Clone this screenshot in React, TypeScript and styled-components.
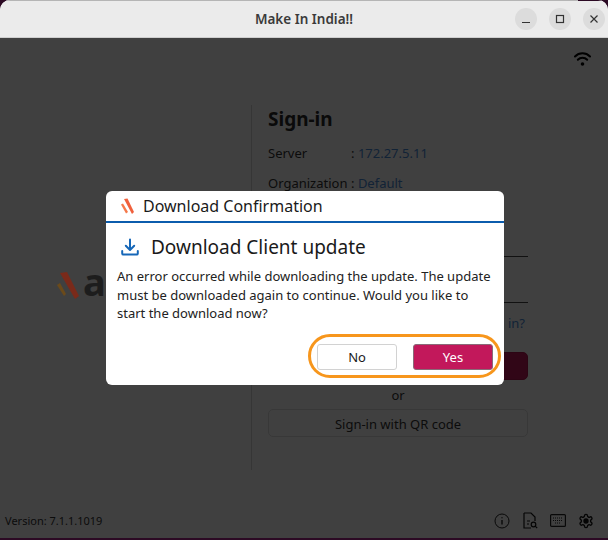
import styled, { createGlobalStyle } from 'styled-components'

const GlobalStyle = createGlobalStyle`
  html, body {
    margin: 0;
    padding: 0;
    background: #2c0a24;
  }
  * {
    box-sizing: border-box;
  }
`

const Window = styled.div`
  position: relative;
  width: 608px;
  height: 538px;
  display: flex;
  flex-direction: column;
  overflow: hidden;
  border-radius: 10px 10px 0 0;
  background: #fff;
  font-family: "Noto Sans", sans-serif;
  color: #1c1c1c;
`

const TitleBar = styled.header`
  position: relative;
  flex: none;
  height: 38px;
  display: flex;
  align-items: center;
  justify-content: flex-end;
  gap: 12px;
  padding-right: 3px;
  background: #ebebeb;
  border-top: 1px solid #b5b5b5;
  border-bottom: 1px solid #cfcfcf;

  &::after {
    content: '';
    position: absolute;
    top: -1px;
    right: 0;
    width: 30px;
    height: 1px;
    background: #2c0a24;
  }
`

const WindowTitle = styled.div`
  position: absolute;
  left: 0;
  right: 0;
  text-align: center;
  font-size: 13.5px;
  font-weight: 600;
  color: #3a3a3a;
`

const WindowButton = styled.div`
  width: 22px;
  height: 22px;
  border-radius: 50%;
  background: #dcdcdc;
  display: flex;
  align-items: center;
  justify-content: center;
  z-index: 1;
`

const Content = styled.main`
  flex: 1;
  min-height: 0;
  display: flex;
  flex-direction: column;
`

const TopRow = styled.div`
  flex: none;
  height: 67px;
  display: flex;
  justify-content: flex-end;
  padding: 13px 17px 0 0;
`

const Columns = styled.div`
  flex: none;
  height: 365px;
  display: flex;
`

/* sits above the backdrop: its colours are the dimmed ones seen in the picture */
const LogoColumn = styled.div`
  position: relative;
  z-index: 1;
  width: 251px;
  display: flex;
  align-items: flex-start;
  padding: 154px 0 0 57px;
`

const LogoText = styled.span`
  font-size: 38px;
  font-weight: 700;
  line-height: 44px;
  letter-spacing: -1px;
  color: #1d1d1d;
`

const FormColumn = styled.section`
  width: 277px;
  border-left: 1px solid #d8d8d8;
  padding: 0 0 0 16px;
  display: flex;
  flex-direction: column;
`

const Heading = styled.h1`
  margin: 0;
  height: 28px;
  font-size: 19px;
  line-height: 28px;
  font-weight: 700;
  color: #2a2a2a;
`

const InfoRow = styled.div`
  display: flex;
  height: 30px;
  margin-top: ${p => p.$top ?? 0}px;
  font-size: 13px;
  line-height: 18px;
`

const InfoLabel = styled.span`
  width: 83px;
  color: #333;
  white-space: nowrap;
`

const InfoValue = styled.span`
  color: #4a8ad8;
  white-space: nowrap;
`

const InfoColon = styled.span`
  color: #333;
`

const InputLine = styled.div`
  height: ${p => p.$height}px;
  border-bottom: 1px solid #444;
`

const ForgotLink = styled.div`
  height: 49px;
  padding: 11px 3px 0 0;
  text-align: right;
  font-size: 13px;
  line-height: 18px;
  color: #4a8ad8;
`

const FormButton = styled.div`
  flex: none;
  height: 28px;
  padding-top: 1px;
  display: flex;
  align-items: center;
  justify-content: center;
  border-radius: 5px;
  font-size: 13px;
  background: ${p => (p.$primary ? '#c2185b' : '#fff')};
  border: 1px solid ${p => (p.$primary ? '#b0174f' : '#ddd')};
  color: ${p => (p.$primary ? '#fff' : '#333')};
`

const OrText = styled.div`
  height: 29px;
  display: flex;
  align-items: center;
  justify-content: center;
  font-size: 13px;
  color: #333;
`

const Footer = styled.footer`
  flex: 1;
  display: flex;
  align-items: flex-start;
  justify-content: space-between;
  padding: 42px 14px 0 5px;
`

const Version = styled.span`
  font-size: 11px;
  line-height: 18px;
  color: #333;
`

const FooterIcons = styled.div`
  display: flex;
  align-items: center;
  gap: 12px;
  color: #222;
`

const Backdrop = styled.div`
  position: absolute;
  inset: 38px 0 0 0;
  background: rgba(0, 0, 0, 0.75);
`

const Dialog = styled.div`
  position: absolute;
  z-index: 2;
  left: 106px;
  top: 191px;
  width: 398px;
  height: 194px;
  display: flex;
  flex-direction: column;
  background: #fff;
  border-radius: 6px;
  color: #1a1a1a;
`

const DialogBar = styled.div`
  flex: none;
  height: 32px;
  display: flex;
  align-items: center;
  gap: 6px;
  padding-left: 14px;
  border-bottom: 2px solid #0b5cad;
  font-size: 16px;
`

const DialogHead = styled.div`
  flex: none;
  height: 44px;
  display: flex;
  align-items: center;
  gap: 12px;
  padding: 3px 0 0 15px;
  font-size: 19px;
`

const DialogText = styled.p`
  margin: 0;
  padding: 0 11px;
  font-size: 13px;
  line-height: 18.5px;
  color: #222;
`

const DialogActions = styled.div`
  flex: 1;
  display: flex;
  justify-content: flex-end;
  align-items: flex-start;
  padding: 11.5px 3px 0 0;
`

const Highlight = styled.div`
  display: flex;
  align-items: center;
  gap: 16px;
  height: 44px;
  padding: 2px 5px 0 6px;
  border: 3px solid #f7961c;
  border-radius: 22px;
`

const DialogButton = styled.div`
  width: 80px;
  height: 26px;
  display: flex;
  align-items: center;
  justify-content: center;
  border-radius: 3px;
  font-size: 13px;
  background: ${p => (p.$primary ? '#c2185b' : '#fff')};
  border: 1px solid ${p => (p.$primary ? '#8a6a78' : '#d2d2d2')};
  color: ${p => (p.$primary ? '#fff' : '#1a1a1a')};
`

const PageLogoMark = () => (
  <svg width="26" height="44" viewBox="0 0 26 44">
    <polygon points="3,14 10,13 22,37 18,40" fill="#7a2a1a" />
    <polygon points="0,26 3,24 9,35 7,37" fill="#6b4a1a" />
  </svg>
)

const DialogLogoMark = () => (
  <svg width="17" height="17" viewBox="0 0 17 17">
    <polygon points="4,1 7.5,0.5 14,14 12,16" fill="#f0603c" />
    <polygon points="1,6.5 3,5.5 8,14 6,15.5" fill="#f5794a" />
  </svg>
)

const DownloadIcon = () => (
  <svg width="18" height="18" viewBox="0 0 18 18" fill="none" stroke="#1667b8" strokeWidth="2" strokeLinecap="round" strokeLinejoin="round">
    <path d="M9 1.5v10M4.8 7.8L9 12l4.2-4.2" />
    <path d="M1.2 13v2.6a1 1 0 0 0 1 1h13.6a1 1 0 0 0 1-1V13" />
  </svg>
)

export default function App() {
  return (
    <>
      <GlobalStyle />
      <Window>
        <TitleBar>
          <WindowTitle>Make In India!!</WindowTitle>
          <WindowButton>
            <svg width="10" height="10" viewBox="0 0 10 10" stroke="#333" strokeWidth="1.2"><path d="M1 8.5h8" /></svg>
          </WindowButton>
          <WindowButton>
            <svg width="10" height="10" viewBox="0 0 10 10" fill="none" stroke="#333" strokeWidth="1.2"><rect x="1.5" y="1.5" width="7" height="7" /></svg>
          </WindowButton>
          <WindowButton>
            <svg width="10" height="10" viewBox="0 0 10 10" stroke="#333" strokeWidth="1.2"><path d="M1.5 1.5l7 7M8.5 1.5l-7 7" /></svg>
          </WindowButton>
        </TitleBar>
        <Content>
          <TopRow>
            <svg width="17" height="16" viewBox="0 0 17 16" fill="none" stroke="#000" strokeWidth="2" strokeLinecap="round">
              <path d="M1 5.5a10.5 10.5 0 0 1 15 0" />
              <path d="M3.8 8.8a6.5 6.5 0 0 1 9.4 0" />
              <circle cx="8.5" cy="13" r="1.8" fill="#000" stroke="none" />
            </svg>
          </TopRow>
          <Columns>
            <LogoColumn>
              <PageLogoMark />
              <LogoText>accops</LogoText>
            </LogoColumn>
            <FormColumn>
              <Heading>Sign-in</Heading>
              <InfoRow $top={11}>
                <InfoLabel>Server</InfoLabel>
                <InfoValue><InfoColon>: </InfoColon>172.27.5.11</InfoValue>
              </InfoRow>
              <InfoRow>
                <InfoLabel>Organization</InfoLabel>
                <InfoValue><InfoColon>: </InfoColon>Default</InfoValue>
              </InfoRow>
              <InputLine $height={53} />
              <InputLine $height={46} />
              <ForgotLink>Trouble signing in?</ForgotLink>
              <FormButton $primary>Sign-in</FormButton>
              <OrText>or</OrText>
              <FormButton>Sign-in with QR code</FormButton>
            </FormColumn>
          </Columns>
          <Footer>
            <Version>Version: 7.1.1.1019</Version>
            <FooterIcons>
              <svg width="16" height="16" viewBox="0 0 16 16" fill="none" stroke="#222" strokeWidth="1"><circle cx="8" cy="8" r="7" /><path d="M8 7v4.5M8 4.2v1" strokeWidth="1.4" /></svg>
              <svg width="16" height="17" viewBox="0 0 16 17" fill="none" stroke="#111" strokeWidth="1.2"><path d="M2 1h7l4 4v4M2 1v15h7" /><path d="M5 9h3M5 12h2" /><circle cx="11.5" cy="12.5" r="2.3" /><path d="M13.2 14.2l2 2" /></svg>
              <svg width="16" height="13" viewBox="0 0 16 13" fill="none" stroke="#222" strokeWidth="1.2"><rect x=".6" y=".6" width="14.8" height="11.8" rx="1" /><path d="M3 4h10M3 6.5h10M5 9h6" strokeDasharray="1 1" /></svg>
              <svg width="16" height="16" viewBox="0 0 24 24" fill="none" stroke="#111" strokeWidth="2"><circle cx="12" cy="12" r="3" fill="#111" /><path d="M12.22 2h-.44a2 2 0 0 0-2 2v.18a2 2 0 0 1-1 1.73l-.43.25a2 2 0 0 1-2 0l-.15-.08a2 2 0 0 0-2.73.73l-.22.38a2 2 0 0 0 .73 2.73l.15.1a2 2 0 0 1 1 1.72v.51a2 2 0 0 1-1 1.74l-.15.09a2 2 0 0 0-.73 2.73l.22.38a2 2 0 0 0 2.73.73l.15-.08a2 2 0 0 1 2 0l.43.25a2 2 0 0 1 1 1.73V20a2 2 0 0 0 2 2h.44a2 2 0 0 0 2-2v-.18a2 2 0 0 1 1-1.73l.43-.25a2 2 0 0 1 2 0l.15.08a2 2 0 0 0 2.73-.73l.22-.39a2 2 0 0 0-.73-2.73l-.15-.08a2 2 0 0 1-1-1.74v-.5a2 2 0 0 1 1-1.74l.15-.09a2 2 0 0 0 .73-2.73l-.22-.38a2 2 0 0 0-2.73-.73l-.15.08a2 2 0 0 1-2 0l-.43-.25a2 2 0 0 1-1-1.73V4a2 2 0 0 0-2-2z" /></svg>
            </FooterIcons>
          </Footer>
        </Content>
        <Backdrop />
        <Dialog>
          <DialogBar>
            <DialogLogoMark />
            Download Confirmation
          </DialogBar>
          <DialogHead>
            <DownloadIcon />
            Download Client update
          </DialogHead>
          <DialogText>
            An error occurred while downloading the update. The update must be downloaded again to continue. Would you like to start the download now?
          </DialogText>
          <DialogActions>
            <Highlight>
              <DialogButton>No</DialogButton>
              <DialogButton $primary>Yes</DialogButton>
            </Highlight>
          </DialogActions>
        </Dialog>
      </Window>
    </>
  )
}
